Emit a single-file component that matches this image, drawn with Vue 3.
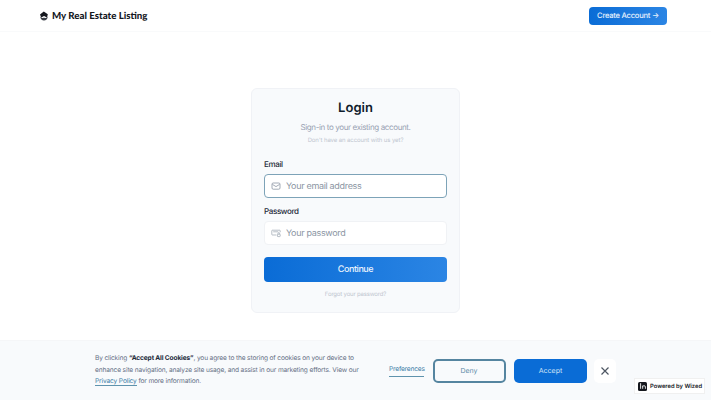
<template>
  <div class="page">
    <header class="nav">
      <div class="brand">
        <svg class="brand__icon" viewBox="0 0 10 10" width="10" height="10" aria-hidden="true">
          <path d="M4.8.4 8.8 3.2 8 6.4 5 4.9 2.2 6.6 1 3.6Z" fill="#15181e" />
          <path d="M1.2 5.6C2.2 7.1 3.6 7.4 5 6.4c1.4 1 2.8.6 3.8-.8C8.6 8 7 9.6 5 9.6S1.4 8 1.2 5.6Z" fill="#3a3f47" />
        </svg>
        <span>My Real Estate Listing</span>
      </div>
      <a class="nav__cta">Create Account →</a>
    </header>

    <main class="main">
      <form class="card" @submit.prevent>
        <h1 class="card__title">Login</h1>
        <p class="card__sub">Sign-in to your existing account.</p>
        <p class="card__hint">Don't have an account with us yet?</p>

        <label class="field__label" for="email">Email</label>
        <div class="field field--focus">
          <svg class="field__icon" viewBox="0 0 10 10" width="10" height="10" fill="none" stroke="#8b95a3" stroke-width=".8" aria-hidden="true">
            <rect x="1" y="2" width="8" height="6.2" rx="1.2" />
            <path d="M1.4 3.4 5 5.6l3.6-2.2" />
          </svg>
          <input id="email" class="field__input" type="email" placeholder="Your email address" />
        </div>

        <label class="field__label field__label--next" for="password">Password</label>
        <div class="field">
          <svg class="field__icon" viewBox="0 0 10 10" width="10" height="10" fill="none" stroke="#9aa3af" stroke-width=".7" aria-hidden="true">
            <path d="M5.4 7H1.4a.6.6 0 0 1-.6-.6V2.8a.6.6 0 0 1 .6-.6h7.2a.6.6 0 0 1 .6.6v1.4" />
            <path d="M2.2 3.8h5" />
            <rect x="6.4" y="6.2" width="2.8" height="2.4" rx=".5" />
            <path d="M7 6.2v-.8a.8.8 0 0 1 1.6 0v.8" />
          </svg>
          <input id="password" class="field__input" type="password" placeholder="Your password" />
        </div>

        <button class="submit" type="submit">Continue</button>
        <a class="forgot">Forgot your password?</a>
      </form>
    </main>

    <section class="cookies">
      <p class="cookies__text">
        <span class="cookies__line">By clicking <strong>“Accept All Cookies”</strong>, you agree to the storing of cookies on your device to</span>
        <span class="cookies__line">enhance site navigation, analyze site usage, and assist in our marketing efforts. View our</span>
        <span class="cookies__line"><a class="cookies__link">Privacy Policy</a> for more information.</span>
      </p>
      <a class="cookies__prefs">Preferences</a>
      <button class="cookies__btn cookies__btn--deny" type="button">Deny</button>
      <button class="cookies__btn cookies__btn--accept" type="button">Accept</button>
      <button class="cookies__close" type="button" aria-label="Close">
        <svg viewBox="0 0 10 10" width="10" height="10" fill="none" stroke="#4d5662" stroke-width="1.2" aria-hidden="true">
          <path d="M1.5 1.5l7 7M8.5 1.5l-7 7" />
        </svg>
      </button>
    </section>

    <a class="wized">
      <span class="wized__logo">
        <svg viewBox="0 0 10 10" width="8" height="8" fill="none" stroke="#fff" stroke-width="1.1" aria-hidden="true">
          <path d="M2 1.5v7M4.6 8.5V4.5M4.6 5.5c.6-1 3.4-1.6 3.4.8v2.2" />
        </svg>
      </span>
      Powered by Wized
    </a>
  </div>
</template>

<script setup>
</script>

<style>
html,
body {
  margin: 0;
  background: #fff;
}
</style>

<style scoped>
.page {
  position: relative;
  width: 711px;
  height: 400px;
  overflow: hidden;
  display: flex;
  flex-direction: column;
  font-family: Inter, "Liberation Sans", sans-serif;
  text-rendering: geometricPrecision;
  color: #101828;
  background: #fff;
}

.nav {
  height: 31px;
  flex: none;
  display: flex;
  align-items: center;
  justify-content: space-between;
  padding: 0 44px 0 39px;
  border-bottom: 1px solid #f9fafb;
}

.brand {
  display: flex;
  align-items: center;
  gap: 3px;
  font-family: Lato, sans-serif;
  font-weight: 900;
  font-size: 9.7px;
  color: #15181e;
}

.nav__cta {
  height: 18px;
  width: 78px;
  display: flex;
  align-items: center;
  justify-content: center;
  border-radius: 4px;
  background: linear-gradient(90deg, #0a6cd6, #2b85e4);
  color: #e8f2fd;
  font-size: 7.6px;
  letter-spacing: -0.25px;
  font-weight: 500;
}

.main {
  flex: 1;
  display: flex;
  justify-content: center;
  align-items: flex-start;
  padding-top: 56px;
}

.card {
  width: 209px;
  height: 225px;
  box-sizing: border-box;
  padding: 11px 12px 0;
  display: flex;
  flex-direction: column;
  background: #f8fafc;
  border: 1px solid #f0f2f6;
  border-radius: 6px;
}

.card__title {
  margin: 0;
  text-align: center;
  font-size: 13px;
  line-height: 17px;
  font-weight: 600;
  color: #101c2c;
}

.card__sub {
  margin: 5px 0 0;
  text-align: center;
  font-size: 8px;
  letter-spacing: -0.37px;
  line-height: 11px;
  color: #98a2b3;
}

.card__hint {
  margin: 3px 0 0;
  text-align: center;
  font-size: 6px;
  letter-spacing: -0.1px;
  line-height: 9px;
  color: #c0c6d0;
}

.field__label {
  margin-top: 14px;
  font-size: 8px;
  letter-spacing: -0.35px;
  line-height: 11px;
  font-weight: 500;
  color: #1d2939;
}

.field__label--next {
  margin-top: 8px;
}

.field {
  margin-top: 4px;
  height: 24px;
  box-sizing: border-box;
  display: flex;
  align-items: center;
  gap: 5px;
  padding: 0 6px;
  background: #fff;
  border: 1px solid #f0f2f5;
  border-radius: 4px;
}

.field--focus {
  border-color: #7da3b8;
}

.field__icon {
  flex: none;
}

.field__input {
  flex: 1;
  min-width: 0;
  border: 0;
  outline: 0;
  padding: 0;
  background: transparent;
  font-family: inherit;
  font-size: 9px;
  letter-spacing: -0.32px;
  text-rendering: geometricPrecision;
  color: #1d2939;
}

.field__input::placeholder {
  color: #8b95a3;
  opacity: 1;
}

.submit {
  margin-top: 12px;
  height: 25px;
  border: 0;
  border-radius: 4px;
  background: linear-gradient(90deg, #0a6cd6, #2b85e4);
  color: #e8f2fd;
  font-family: inherit;
  font-size: 9px;
  letter-spacing: -0.45px;
  font-weight: 500;
  text-rendering: geometricPrecision;
}

.forgot {
  margin-top: 8px;
  text-align: center;
  font-size: 6px;
  letter-spacing: -0.18px;
  line-height: 9px;
  color: #c0c6d0;
}

.cookies {
  height: 60px;
  flex: none;
  box-sizing: border-box;
  display: flex;
  align-items: center;
  padding: 0 95px;
  background: #f8fafc;
  border-top: 1px solid #f5f6f8;
}

.cookies__text {
  margin: 0;
  width: 270px;
  flex: none;
  font-size: 6.6px;
  letter-spacing: -0.14px;
  line-height: 11.5px;
  color: #667085;
}

.cookies__line {
  display: block;
  white-space: nowrap;
}

.cookies__text strong {
  font-weight: 700;
  color: #1d2939;
}

.cookies__link {
  color: #3f7fa8;
  border-bottom: 1px solid #5f93ad;
}

.cookies__prefs {
  margin-left: 24px;
  width: 35px;
  flex: none;
  padding-bottom: 2px;
  font-size: 6.6px;
  letter-spacing: -0.18px;
  line-height: 9px;
  white-space: nowrap;
  color: #3f7fa8;
  border-bottom: 1px solid #5f93ad;
}

.cookies__btn {
  flex: none;
  width: 73px;
  height: 24px;
  box-sizing: border-box;
  border-radius: 5px;
  font-family: inherit;
  font-size: 7px;
  text-rendering: geometricPrecision;
}

.cookies__btn--deny {
  margin-left: 8.5px;
  background: #f8fafc;
  border: 2px solid #5585a0;
  color: #5f8ca8;
}

.cookies__btn--accept {
  margin-left: 8.5px;
  background: #0a6cd6;
  border: 0;
  color: #cfe3f7;
}

.cookies__close {
  margin-left: 6.5px;
  flex: none;
  width: 22px;
  height: 24px;
  padding: 0;
  display: flex;
  align-items: center;
  justify-content: center;
  background: #fff;
  border: 0;
  border-radius: 5px;
}

.wized {
  position: absolute;
  right: 6px;
  bottom: 6px;
  height: 16px;
  box-sizing: border-box;
  width: 71px;
  display: flex;
  align-items: center;
  gap: 3px;
  padding: 0 3px;
  white-space: nowrap;
  background: #fff;
  border: 1px solid #f0f0f0;
  font-size: 5.8px;
  font-weight: 600;
  color: #15181e;
}

.wized__logo {
  flex: none;
  width: 9px;
  height: 9px;
  display: flex;
  align-items: center;
  justify-content: center;
  background: #15181e;
  border-radius: 1.5px;
}
</style>
